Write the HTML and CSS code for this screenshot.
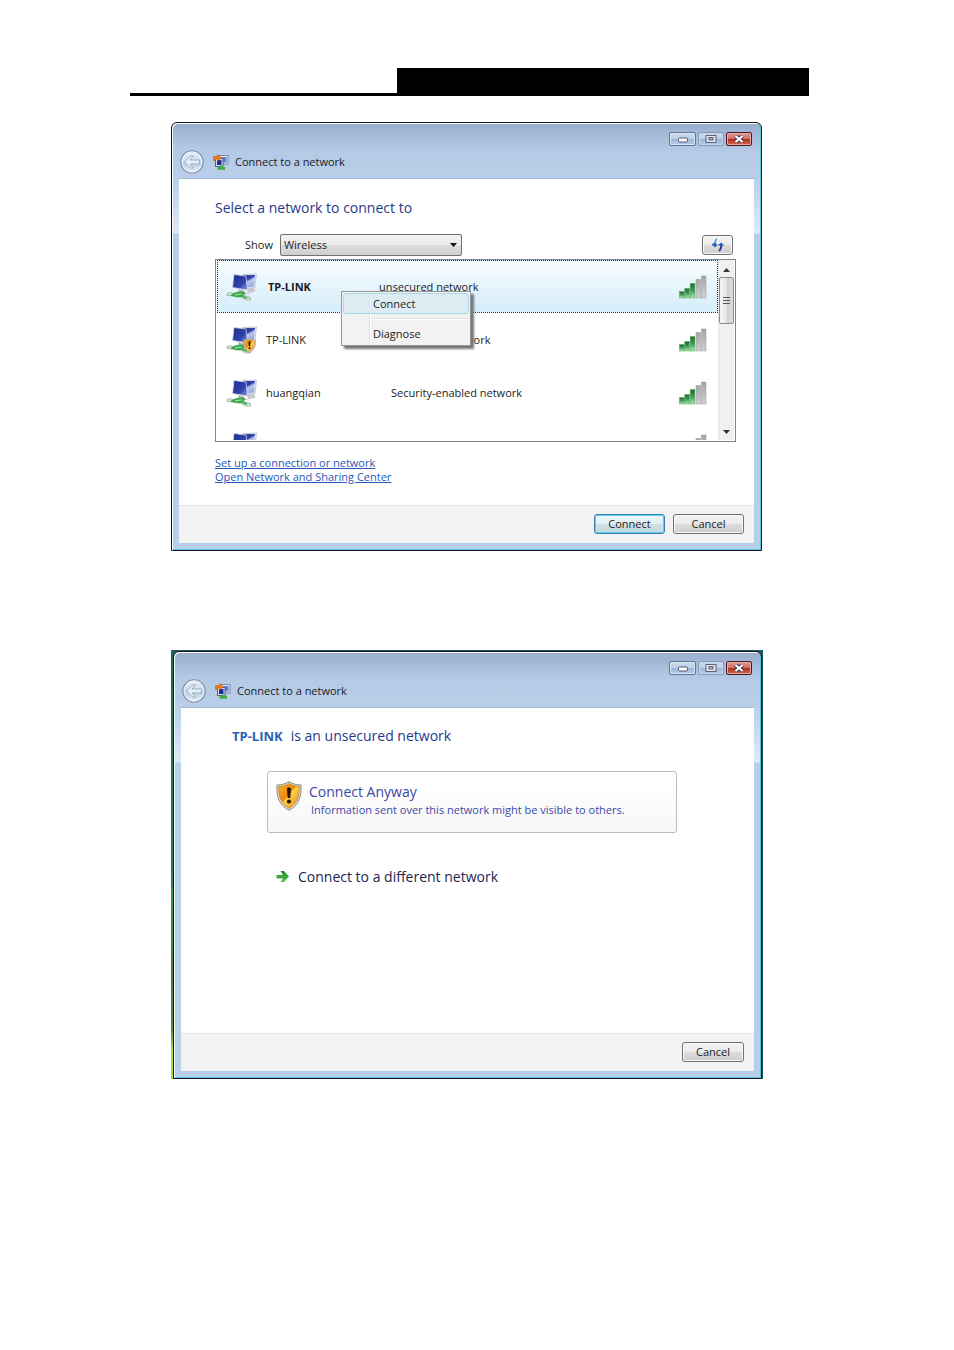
FILE: index.html
```html
<!DOCTYPE html>
<html lang="en">
<head>
    <meta charset="UTF-8">
    <meta name="viewport" content="width=device-width, initial-scale=1.0">
    <title>Connect to a network</title>
    <link rel="stylesheet" href="styles.css">
</head>
<body>
    <!-- shared icons -->
    <svg class="sprite" width="0" height="0" aria-hidden="true">
        <defs>
            <linearGradient id="screen" x1="0" y1="0" x2="1" y2="1">
                <stop offset="0" stop-color="#1f2d8c"/>
                <stop offset="0.6" stop-color="#2f41ad"/>
                <stop offset="1" stop-color="#8d9fe4"/>
            </linearGradient>
            <linearGradient id="screenBack" x1="0.2" y1="0" x2="0.7" y2="1">
                <stop offset="0" stop-color="#1f2d8c"/>
                <stop offset="0.35" stop-color="#3246b0"/>
                <stop offset="0.5" stop-color="#b9c5f2"/>
                <stop offset="1" stop-color="#93a3e6"/>
            </linearGradient>
            <linearGradient id="gold" x1="0" y1="0" x2="1" y2="1">
                <stop offset="0" stop-color="#f9b52b"/>
                <stop offset="0.45" stop-color="#ee8410"/>
                <stop offset="0.5" stop-color="#fbd34a"/>
                <stop offset="1" stop-color="#e88a12"/>
            </linearGradient>
            <linearGradient id="barOn" x1="0" y1="0" x2="0" y2="1">
                <stop offset="0" stop-color="#1f6b30"/>
                <stop offset="0.5" stop-color="#3f9a52"/>
                <stop offset="1" stop-color="#b4ecb4"/>
            </linearGradient>
            <linearGradient id="barOff" x1="0" y1="0" x2="0" y2="1">
                <stop offset="0" stop-color="#a4a4a4"/>
                <stop offset="1" stop-color="#d2d2d2"/>
            </linearGradient>
            <linearGradient id="orb" x1="0" y1="0" x2="0" y2="1">
                <stop offset="0" stop-color="#e9f0f8"/>
                <stop offset="0.5" stop-color="#cbdaeb"/>
                <stop offset="0.5" stop-color="#b6cae1"/>
                <stop offset="1" stop-color="#e6f0f9"/>
            </linearGradient>
            <linearGradient id="leaf" x1="0" y1="0" x2="0" y2="1">
                <stop offset="0" stop-color="#1f8a2a"/>
                <stop offset="1" stop-color="#4fc948"/>
            </linearGradient>
        </defs>
        <symbol id="shield" viewBox="0 0 26 30">
            <path d="M13 0.700C9 3 5.500 4 1 4C0.500 14 2 23.500 13 29.300C24 23.500 25.500 14 25 4C20.500 4 17 3 13 0.700Z" fill="#e4e0d2" stroke="#8b8779" stroke-width="1"/>
            <path d="M13 2.600C9.500 4.600 6.500 5.500 2.700 5.700C2.700 14.500 4.300 22 13 27.300C21.700 22 23.300 14.500 23.300 5.700C19.500 5.500 16.500 4.600 13 2.600Z" fill="url(#gold)" stroke="#b3670c" stroke-width="0.600"/>
            <path d="M11 7.500C11 6 15 6 15 7.500L14.300 17H11.700Z" fill="#2b1605"/>
            <circle cx="13" cy="20.500" r="2.100" fill="#2b1605"/>
        </symbol>
        <symbol id="computers" viewBox="0 0 32 28">
            <path d="M21 16L28 15L29.500 18.500L22 20.500Z" fill="#c9cace"/>
            <path d="M16.500 1.500L30.500 1L29 14.500L20 16.500Z" fill="#e6e8ee" stroke="#b2b6c2" stroke-width="0.700"/>
            <path d="M17.500 2.200L29 2L27.800 13.500L20.500 14.800Z" fill="url(#screenBack)"/>
            <path d="M8 1.500L20 3L21.500 17L6.500 14.500Z" fill="url(#screen)" stroke="#d2d5de" stroke-width="0.800"/>
            <path d="M12 16L18 17.500L19 19.500L24 21.500L13 20Z" fill="#b4b6bb"/>
            <path d="M1 20.500L4.500 19.500L9 21L6 23L1 22.200Z" fill="#d8e2d8" stroke="#90a894" stroke-width="0.700"/>
            <path d="M5 22.300C9 19 14 18.500 18.500 19.500L17.500 23.500C13 24.500 9 24 5 22.300Z" fill="#35a845" stroke="#2b8b3c" stroke-width="0.600"/>
            <path d="M9 21.800L16 20.800" stroke="#8fe094" stroke-width="1.200"/>
            <path d="M17 22L24.500 24.500L24.500 27L20 27L15 24.500Z" fill="#cfe6d2" stroke="#8fa895" stroke-width="0.700"/>
            <path d="M16 23L21 25.300" stroke="#35a845" stroke-width="1.600"/>
        </symbol>
        <symbol id="signal" viewBox="0 0 28 24">
            <g fill="url(#barOn)" stroke="#4aa05a" stroke-width="0.500">
                <rect x="0.500" y="16.500" width="4.700" height="6.500"/>
                <rect x="5.800" y="13.500" width="4.700" height="9.500"/>
                <rect x="11.200" y="8.500" width="4.700" height="14.500"/>
            </g>
            <g fill="url(#barOff)" stroke="#989898" stroke-width="0.500">
                <rect x="17" y="4.500" width="4.500" height="18.500"/>
                <rect x="22.500" y="1" width="4.500" height="22"/>
            </g>
        </symbol>
        <symbol id="back" viewBox="0 0 24 24">
            <circle cx="12" cy="12" r="11.200" fill="url(#orb)" stroke="#7d8ea6" stroke-width="1.100"/>
            <circle cx="12" cy="12" r="9.800" fill="none" stroke="#eef4fb" stroke-width="1"/>
            <path d="M4.500 12L10.500 6H13.500L10 10H19.500V14H10L13.500 18H10.500Z" fill="#e6eef7" stroke="#94aac4" stroke-width="0.900"/>
        </symbol>
        <symbol id="netapp" viewBox="0 0 16 16">
            <rect x="6.500" y="1.500" width="8.500" height="8.500" fill="#dfe6f2" stroke="#7c86a0"/>
            <rect x="8.500" y="3" width="5" height="5.500" fill="#5f7fd8"/>
            <rect x="2.500" y="4.500" width="7.500" height="8" fill="#d5def0" stroke="#56638c"/>
            <rect x="4" y="6" width="4.500" height="5" fill="#1d2f94"/>
            <path d="M0 14.500H16" stroke="#c5cbd0" stroke-width="1.600"/>
            <path d="M7 11.500H10V13H12V15.800H4.500V13H7Z" fill="#3dae4c"/>
            <path d="M0.500 2.500H4.500V0.500L8.500 3.800L4.500 7V5H2.500V6.500H0.500Z" fill="#f07c1c" stroke="#c8600f" stroke-width="0.600"/>
        </symbol>
    </svg>

    <header class="page-header">
        <div class="page-header-block"></div>
    </header>

    <main>
        <section class="shot">
            <div class="window">
                <div class="titlebar">
                    <div class="captions">
                        <button class="caption minimize" aria-label="Minimize"><svg width="12" height="6" viewBox="0 0 12 6"><rect x="1.500" y="1" width="9" height="4" rx="1" fill="#fff" stroke="#54597a"/></svg></button>
                        <button class="caption dim" aria-label="Maximize"><svg width="12" height="8" viewBox="0 0 12 8"><rect x="1" y="0.500" width="10" height="7" fill="#e8e8ec" stroke="#5d6179"/><rect x="4" y="2.500" width="4" height="2.500" fill="#9fb4d4" stroke="#5d6179"/></svg></button>
                        <button class="caption close" aria-label="Close"><svg width="12" height="8" viewBox="0 0 12 8"><path d="M2.500 1L9.500 7M9.500 1L2.500 7" stroke="#4a3444" stroke-width="4"/><path d="M2.500 1L9.500 7M9.500 1L2.500 7" stroke="#fff" stroke-width="2.200"/></svg></button>
                    </div>
                    <div class="nav">
                        <button class="back" aria-label="Back"><svg width="24" height="24"><use href="#back"/></svg></button>
                        <svg width="16" height="16"><use href="#netapp"/></svg>
                        <span>Connect to a network</span>
                    </div>
                </div>

                <div class="content picker">
                    <h1>Select a network to connect to</h1>
                    <div class="toolbar">
                        <label for="show">Show</label>
                        <div class="select">
                            <select id="show">
                                <option>Wireless</option>
                            </select>
                            <svg width="7" height="4" viewBox="0 0 7 4"><path d="M0 0H7L3.500 4Z" fill="#111"/></svg>
                        </div>
                        <button class="btn refresh" aria-label="Refresh"><svg width="14" height="14" viewBox="0 0 14 14"><path d="M6 1C4.200 2 3.900 4 4 7" fill="none" stroke="#3fa0dc" stroke-width="1.600"/><path d="M0.500 6.500L3.500 4.500L6.500 6.500L4.200 9.500Z" fill="#2e62c0"/><path d="M6.500 7.500L10 4.500L13.500 7.500Z" fill="#2e62c0"/><path d="M10.200 7C10.300 10 9.800 11.500 8 13" fill="none" stroke="#27418f" stroke-width="1.800"/></svg></button>
                    </div>

                    <div class="list">
                        <ul class="networks">
                            <li class="selected">
                                <svg width="32" height="28"><use href="#computers"/></svg>
                                <span class="name">TP-LINK</span>
                                <span class="type">unsecured network</span>
                                <svg class="signal" width="28" height="24"><use href="#signal"/></svg>
                            </li>
                            <li>
                                <svg width="32" height="28"><use href="#computers"/><use href="#shield" x="17" y="12" width="13" height="15"/></svg>
                                <span class="name">TP-LINK</span>
                                <span class="type">unsecured network</span>
                                <svg class="signal" width="28" height="24"><use href="#signal"/></svg>
                            </li>
                            <li>
                                <svg width="32" height="28"><use href="#computers"/></svg>
                                <span class="name">huangqian</span>
                                <span class="type">Security-enabled network</span>
                                <svg class="signal" width="28" height="24"><use href="#signal"/></svg>
                            </li>
                            <li>
                                <svg width="32" height="28"><use href="#computers"/></svg>
                                <span class="name"></span>
                                <span class="type"></span>
                                <svg class="signal" width="28" height="24"><use href="#signal"/></svg>
                            </li>
                        </ul>
                        <div class="scrollbar">
                            <svg width="15" height="16" viewBox="0 0 15 16"><path d="M4 11L7.500 7L11 11Z" fill="#333"/></svg>
                            <div class="thumb"></div>
                            <svg class="down" width="15" height="16" viewBox="0 0 15 16"><path d="M4 6L7.500 10L11 6Z" fill="#333"/></svg>
                        </div>
                        <div class="menu">
                            <button class="hover">Connect</button>
                            <hr>
                            <button>Diagnose</button>
                        </div>
                    </div>

                    <div class="links">
                        <a href="#">Set up a connection or network</a>
                        <a href="#">Open Network and Sharing Center</a>
                    </div>
                </div>

                <div class="footer">
                    <button class="btn default">Connect</button>
                    <button class="btn">Cancel</button>
                </div>
            </div>
        </section>

        <section class="shot desktop">
            <div class="window">
                <div class="titlebar">
                    <div class="captions">
                        <button class="caption minimize" aria-label="Minimize"><svg width="12" height="6" viewBox="0 0 12 6"><rect x="1.500" y="1" width="9" height="4" rx="1" fill="#fff" stroke="#54597a"/></svg></button>
                        <button class="caption dim" aria-label="Maximize"><svg width="12" height="8" viewBox="0 0 12 8"><rect x="1" y="0.500" width="10" height="7" fill="#e8e8ec" stroke="#5d6179"/><rect x="4" y="2.500" width="4" height="2.500" fill="#9fb4d4" stroke="#5d6179"/></svg></button>
                        <button class="caption close" aria-label="Close"><svg width="12" height="8" viewBox="0 0 12 8"><path d="M2.500 1L9.500 7M9.500 1L2.500 7" stroke="#4a3444" stroke-width="4"/><path d="M2.500 1L9.500 7M9.500 1L2.500 7" stroke="#fff" stroke-width="2.200"/></svg></button>
                    </div>
                    <div class="nav">
                        <button class="back" aria-label="Back"><svg width="24" height="24"><use href="#back"/></svg></button>
                        <svg width="16" height="16"><use href="#netapp"/></svg>
                        <span>Connect to a network</span>
                    </div>
                </div>

                <div class="content warning">
                    <h2><b>TP-LINK</b> is an unsecured network</h2>
                    <button class="command">
                        <svg width="26" height="30"><use href="#shield"/></svg>
                        <span class="command-text">
                            <span class="command-title">Connect Anyway</span>
                            <span class="command-note">Information sent over this network might be visible to others.</span>
                        </span>
                    </button>
                    <button class="other">
                        <svg width="14" height="14" viewBox="0 0 14 14"><path d="M0.500 5H7L4.500 1H8L13 6.500L8 12H4.500L7 8.500H0.500Z" fill="url(#leaf)"/></svg>
                        Connect to a different network
                    </button>
                </div>

                <div class="footer">
                    <button class="btn small">Cancel</button>
                </div>
            </div>
        </section>
    </main>
</body>
</html>
```
FILE: styles.css
```css
* {
    box-sizing: border-box;
}
body {
    margin: 0;
    padding: 68px 145px 40px 130px;
    background: #fff;
    color: #1c1c1c;
    font-family: "Open Sans", "Noto Sans", sans-serif;
    font-size: 11px;
    line-height: 14px;
}
button, select {
    font: inherit;
    color: inherit;
    cursor: pointer;
}
svg {
    display: block;
    flex-shrink: 0;
}
.sprite {
    position: absolute;
}

/* page header */
.page-header {
    height: 28px;
    border-bottom: 3px solid #000;
}
.page-header-block {
    width: 412px;
    max-width: 70%;
    height: 100%;
    margin-left: auto;
    background: #000;
}
main {
    padding: 26px 46px 0 41px;
}

/* windows */
.shot {
    padding-right: 1px;
    margin-bottom: 99px;
}
.desktop {
    margin-bottom: 0;
    padding: 1px 1px 0 2px;
    background:
        linear-gradient(#1f6a64 0, #2b7f68 238px, #2e9a58 240px, #3f7f38 320px, #4f8f38 380px, #a8dc3a 400px, #a8dc3a 100%) left / 2px 100% no-repeat,
        #1d5560;
}
.window {
    padding: 0 7px 7px;
    border: 1px solid #15191c;
    border-radius: 6px 6px 0 0;
    background: linear-gradient(#98adcb 0, #b4c9e5 26px, #b9cfe9 56px, #dfe9f6 110px, #b9cfe9 111px);
    box-shadow: inset 1px 1px #fff, inset -1px -1px #55c6dc;
}
.titlebar {
    height: 56px;
    padding-top: 9px;
    border-bottom: 1px solid #a3bad8;
}
.captions {
    display: flex;
    justify-content: flex-end;
    gap: 2px;
    padding-right: 2px;
}
.caption {
    display: flex;
    align-items: center;
    justify-content: center;
    width: 26px;
    height: 14px;
    padding: 0;
    border: 1px solid #5c7497;
    border-radius: 2px;
    background: linear-gradient(#cbdaec 0, #bdd0e8 50%, #9db5d5 50%, #b4cbe8 100%);
    box-shadow: inset 0 0 0 1px #dae6f3;
}
.caption.minimize {
    width: 27px;
    padding-top: 2px;
}
.caption.dim {
    border-color: #8299bb;
    box-shadow: inset 0 0 0 1px #c3d5ea;
}
.caption.close {
    border-color: #4d1a24;
    background: linear-gradient(#dc9a94 0, #cf6e66 50%, #ae2a20 50%, #cf6a58 100%);
    box-shadow: inset 0 0 0 1px #e3aaa4;
}
.nav {
    display: flex;
    align-items: center;
    gap: 6px;
    padding: 4px 0 0 1px;
}
.back {
    margin-right: 3px;
    padding: 0;
    border: 0;
    background: none;
}
.content {
    background: #fff;
}
.footer {
    display: flex;
    justify-content: flex-end;
    gap: 8px;
    padding: 8px 10px 9px;
    border-top: 1px solid #e3e3e3;
    background: #f2f2f2;
}
.btn {
    width: 71px;
    height: 20px;
    padding: 0;
    border: 1px solid #707070;
    border-radius: 3px;
    background: linear-gradient(#f3f3f3 0, #ebebeb 50%, #dcdcda 50%, #cfcfcd 100%);
    box-shadow: inset 0 0 0 1px #fafafa;
}
.btn.default {
    border-color: #3c7fb1;
    background: linear-gradient(#eef5f7 0, #e2eff3 50%, #cfe0e6 50%, #c4d9df 100%);
    box-shadow: inset 0 0 0 1px #5fd0f0;
}
.btn.small {
    width: 62px;
}

/* network picker */
.picker {
    padding: 18px 18px 21px 36px;
}
h1 {
    margin: 0;
    font-size: 14px;
    font-weight: 400;
    line-height: 22px;
    color: #1f3a8c;
}
.toolbar {
    display: flex;
    align-items: center;
    gap: 7px;
    padding: 15px 3px 3px 30px;
}
.select {
    position: relative;
    width: 182px;
}
.select select {
    display: block;
    width: 100%;
    height: 22px;
    padding: 0 20px 0 3px;
    border: 1px solid #707070;
    border-radius: 2px;
    appearance: none;
    background: linear-gradient(#f2f2f2 0, #ebebeb 50%, #dddddd 50%, #cfcfcf 100%);
}
.select svg {
    position: absolute;
    top: 9px;
    right: 5px;
    pointer-events: none;
}
.refresh {
    display: flex;
    align-items: center;
    justify-content: center;
    width: 31px;
    margin-left: auto;
}
.list {
    position: relative;
    display: flex;
    height: 183px;
    padding: 0 1px 1px;
    border: 1px solid #7f838d;
}
.networks {
    flex: 1;
    margin: 0;
    padding: 0;
    overflow: hidden;
    list-style: none;
}
.networks li {
    display: flex;
    align-items: center;
    height: 53px;
    padding: 0 11px 0 9px;
}
.networks .selected {
    padding: 0 10px 0 8px;
    border: 1px dotted #333;
    background: linear-gradient(#f7fcfe, #d5edfa);
}
.name {
    width: 125px;
    margin-left: 8px;
}
.selected .name {
    width: 111px;
    margin-left: 10px;
    font-weight: 700;
}
.signal {
    margin-left: auto;
}
.scrollbar {
    display: flex;
    flex-direction: column;
    width: 16px;
    padding-top: 1px;
    background: #f0f0f0;
    border-left: 1px solid #e6e6e6;
}
.thumb {
    height: 47px;
    border: 1px solid #8c8c8c;
    border-radius: 2px;
    background:
        repeating-linear-gradient(#555 0 1px, transparent 1px 3px) center / 7px 8px no-repeat,
        linear-gradient(90deg, #f5f5f5 0, #e6e6e8 50%, #cfcfd2 50%, #dcdcde 100%);
}
.down {
    margin-top: auto;
}

/* context menu */
.menu {
    position: absolute;
    top: 31px;
    left: 125px;
    width: 130px;
    padding: 1px;
    border: 1px solid #979797;
    background: linear-gradient(90deg, transparent 27px, #e0e0e0 27px 28px, #fff 28px 29px, transparent 29px) #f2f2f2;
    box-shadow: 3px 3px 2px #777;
}
.menu button {
    display: block;
    width: 100%;
    height: 21px;
    padding: 0 0 0 29px;
    border: 1px solid transparent;
    border-radius: 3px;
    background: none;
    text-align: left;
}
.menu .hover {
    border-color: #a8d8eb;
    background: rgba(205, 232, 242, 0.6);
}
.menu hr {
    margin: 4px 0 3px 28px;
    border: 0;
    border-top: 1px solid #e0e0e0;
    border-bottom: 1px solid #fff;
}
.links {
    display: flex;
    flex-direction: column;
    align-items: flex-start;
    padding-top: 14px;
}
.links a {
    color: #2558b8;
}

/* unsecured warning */
.warning {
    padding: 17px 77px 145px 51px;
}
h2 {
    display: flex;
    align-items: baseline;
    gap: 8px;
    margin: 0;
    font-size: 14px;
    font-weight: 400;
    line-height: 22px;
    color: #1f3a8c;
}
h2 b {
    font-size: 13px;
    color: #2a62b8;
}
.command {
    display: flex;
    gap: 7px;
    width: calc(100% - 35px);
    height: 62px;
    margin: 24px 0 0 35px;
    padding: 9px 8px;
    border: 1px solid #bdbdbd;
    border-radius: 3px;
    background: linear-gradient(#fff 0, #fff 20%, #f6f6f6 100%);
    text-align: left;
    color: #3a48a8;
}
.command-text {
    display: flex;
    flex-direction: column;
}
.command-title {
    font-size: 14px;
    line-height: 22px;
}
.command-note {
    padding-left: 2px;
}
.other {
    display: flex;
    align-items: center;
    gap: 8px;
    margin: 33px 0 0 44px;
    padding: 0;
    border: 0;
    background: none;
    font-size: 14px;
    line-height: 22px;
    color: #1a1f50;
}
```
